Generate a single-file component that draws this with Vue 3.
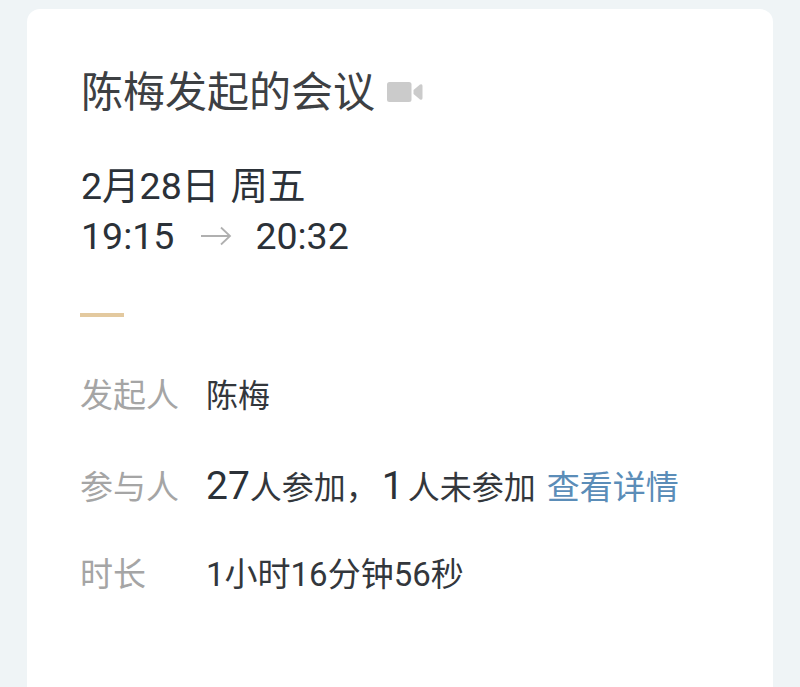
<script setup>
const rows = [
  { label: '发起人', key: 'host' },
  { label: '参与人', key: 'people' },
  { label: '时长', key: 'time' }
]
</script>

<template>
  <div class="page">
    <main class="card">
      <h1 class="title">
        <span>陈梅发起的会议</span>
        <svg class="cam" width="36" height="20" viewBox="0 0 36 20">
          <rect x="0" y="0" width="24.5" height="20" rx="2.5" fill="#cbcbcb" />
          <path d="M26.5 8 L33 2.6 Q35.5 1.4 35.5 4 V16 Q35.5 18.6 33 17.4 L26.5 12 Z" fill="#cbcbcb" />
        </svg>
      </h1>
      <div class="when">
        <div class="date">2月28日 周五</div>
        <div class="clock">
          <span>19:15</span>
          <svg class="arrow" width="32" height="22" viewBox="0 0 32 22">
            <path d="M1 11 H30 M21 2.5 L30 11 L21 19.5" fill="none" stroke="#b0b0b0" stroke-width="1.8" />
          </svg>
          <span>20:32</span>
        </div>
      </div>
      <div class="rule"></div>
      <div class="rows">
        <div v-for="r in rows" :key="r.key" class="row" :class="'row-' + r.key">
          <div class="label">{{ r.label }}</div>
          <div v-if="r.key === 'host'" class="value">陈梅</div>
          <div v-else-if="r.key === 'people'" class="value">
            <span class="num">27</span><span>人参加，</span><span class="num one">1</span><span class="gap">人未参加</span><a class="link">查看详情</a>
          </div>
          <div v-else class="value duration">1小时16分钟56秒</div>
        </div>
      </div>
    </main>
  </div>
</template>

<style>
html, body { margin: 0; background: #eff4f6; }
</style>

<style scoped>
.page {
  height: 687px;
  overflow: hidden;
  padding: 9px 27px 0;
  box-sizing: border-box;
  font-family: Roboto, "Noto Sans CJK SC", sans-serif;
}
.card {
  height: 700px;
  background: #fff;
  border-radius: 13px;
  padding: 62px 54px 0;
  box-sizing: border-box;
}
.title {
  margin: 0;
  display: flex;
  align-items: center;
  gap: 12px;
  height: 44px;
  font-size: 42px;
  font-weight: 400;
  color: #3d4043;
  line-height: 44px;
}
.cam { margin-top: -3px; }
.when {
  margin-top: 46px;
  color: #2b3138;
  font-size: 37.5px;
  line-height: 50px;
}
.date { word-spacing: 2px; }
.clock { display: flex; align-items: center; }
.arrow { margin: 0 23px 0 26px; }
.rule {
  width: 44px;
  height: 4px;
  margin-left: -1px;
  background: #e3c99f;
  margin-top: 52px;
}
.rows { margin-top: 54px; }
.row {
  display: flex;
  align-items: center;
  height: 44px;
}
.row-people { margin-top: 48px; }
.row-time { margin-top: 43px; }
.label {
  width: 126px;
  flex: none;
  margin-left: -1px;
  font-size: 33px;
  color: #a5a5a5;
}
.value {
  font-size: 32px;
  color: #33373c;
  white-space: nowrap;
}
.duration { font-size: 33px; }
.num { font-size: 39px; color: #2b3138; }
.one { margin-left: 4px; }
.gap { margin-left: 4px; }
.link { color: #5b8db8; margin-left: 11px; font-size: 33px; }
</style>
